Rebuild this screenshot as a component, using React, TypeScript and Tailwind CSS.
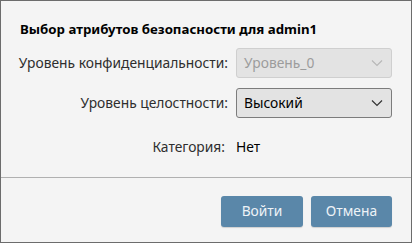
import React from "react";

function Chevron({ className }: { className: string }) {
  return (
    <svg width="12" height="8" viewBox="0 0 12 8" className={className} fill="none">
      <path d="M1 1.5 L6 6.5 L11 1.5" stroke="currentColor" strokeWidth="1.2" />
    </svg>
  );
}

export default function App() {
  return (
    <div
      className="w-[412px] h-[243px] border border-[#6c6c6c] bg-[#f4f4f4] flex flex-col text-[13.8px] text-[#1a1a1a]"
      style={{ fontFamily: '"Noto Sans", "Open Sans", sans-serif' }}
    >
      <div className="pl-[19px] pt-[19px] font-bold text-[13.25px] leading-[18px] text-black">
        Выбор атрибутов безопасности для admin1
      </div>

      <div className="grid grid-cols-[208px_156px] gap-x-2 items-center ml-[19px] mt-[10px]">
        <div className="flex justify-end whitespace-nowrap text-[#2e2e2e]">Уровень конфиденциальности:</div>
        <div className="h-[30px] rounded-[3px] border border-[#cfcfcf] bg-[#e3e3e3] flex items-center justify-between pl-[7px] pr-[8px] text-[#9c9c9c]">
          <span>Уровень_0</span>
          <Chevron className="text-[#b8b8b8]" />
        </div>

        <div className="flex justify-end whitespace-nowrap text-[#2e2e2e] mt-[10px]">Уровень целостности:</div>
        <div className="h-[30px] mt-[10px] rounded-[3px] border border-[#7c7c7c] bg-[#e3e3e3] flex items-center justify-between pl-[7px] pr-[8px] text-black">
          <span>Высокий</span>
          <Chevron className="text-[#333]" />
        </div>

        <div className="flex justify-end whitespace-nowrap text-[#2e2e2e] mt-[19px] pr-[3px]">Категория:</div>
        <div className="mt-[19px] text-black">Нет</div>
      </div>

      <div className="mt-[19px] border-t border-[#b0b0b0]" />

      <div className="flex justify-end gap-2 pr-[19px] pt-[18px]">
        <button className="w-[82px] h-[31px] rounded-[3px] bg-[#5a87a9] text-[#eef3f7] shadow-[0_1px_1px_rgba(0,0,0,0.15)]">
          Войти
        </button>
        <button className="w-[81px] h-[31px] rounded-[3px] bg-[#5a87a9] text-[#eef3f7] shadow-[0_1px_1px_rgba(0,0,0,0.15)]">
          Отмена
        </button>
      </div>
    </div>
  );
}
